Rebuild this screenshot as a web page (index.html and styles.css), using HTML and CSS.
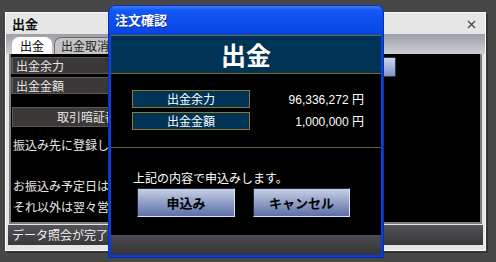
FILE: index.html
```html
<!DOCTYPE html>
<html lang="ja">
<head>
  <meta charset="UTF-8">
  <title>出金</title>
  <link rel="stylesheet" href="styles.css">
</head>
<body>
  <div class="desk">

    <!-- 背面：出金ウィンドウ -->
    <div class="win">
      <div class="win-title">
        <span>出金</span>
        <svg class="close" width="9" height="9" viewBox="0 0 9 9"><path d="M1 1L8 8M8 1L1 8" stroke="#4a4a4a" stroke-width="1.4"/></svg>
      </div>
      <div class="tabs">
        <div class="tab active">出金</div>
        <div class="tab">出金取消</div>
      </div>
      <div class="panel">
        <div class="row">
          <div class="cell">出金余力</div>
          <button class="mini"></button>
        </div>
        <div class="row">
          <div class="cell">出金金額</div>
        </div>
        <div class="pin">取引暗証番号</div>
        <div class="note">
          <p>振込み先に登録している口座へ出金します。</p>
          <p>&nbsp;</p>
          <p>お振込み予定日は、</p>
          <p>それ以外は翌々営業</p>
        </div>
      </div>
      <div class="status">データ照会が完了しました。</div>
    </div>

    <!-- 前面：注文確認ダイアログ -->
    <div class="dlg">
      <div class="dlg-title">注文確認</div>
      <div class="dlg-body">
        <div class="dlg-head">出金</div>
        <div class="summary">
          <div class="label">出金余力</div>
          <div class="value">96,336,272 <span>円</span></div>
          <div class="label">出金金額</div>
          <div class="value">1,000,000 <span>円</span></div>
        </div>
        <div class="msg">上記の内容で申込みします。</div>
        <div class="btns">
          <button class="btn ok">申込み</button>
          <button class="btn">キャンセル</button>
        </div>
        <div class="dlg-foot"></div>
      </div>
    </div>

  </div>
</body>
</html>
```

FILE: styles.css
```css
body {
  margin: 0;
  background: #474747;
  font-family: "Noto Sans CJK JP", "Liberation Sans", sans-serif;
  font-size: 12px;
}

.desk {
  position: relative;
  width: 496px;
  height: 262px;
  overflow: hidden;
  background: #474747;
}

/* 背面ウィンドウ */
.win {
  position: absolute;
  left: 5px;
  top: 12px;
  width: 481px;
  height: 239px;
  box-sizing: border-box;
  background: #e6e6e6;
  border: 1px solid #fbfbfb;
  box-shadow: 2px 2px 0 #333;
  padding: 0 3px 3px 3px;
  display: flex;
  flex-direction: column;
}

.win-title {
  height: 21px;
  display: flex;
  align-items: center;
  justify-content: space-between;
  padding: 0 6px 0 3px;
  font-weight: bold;
  font-size: 13px;
  color: #111;
}

.close {
  margin-top: 2px;
}

.tabs {
  height: 20px;
  margin: 0 -3px;
  padding-left: 6px;
  background: linear-gradient(#9ba0a6, #cdd0d3);
  display: flex;
  align-items: flex-end;
  gap: 2px;
}

.tab {
  height: 16px;
  line-height: 16px;
  padding: 0 6px;
  background: #c3c3c3;
  color: #222;
  border: 1px solid #6b6b6b;
  border-bottom: 0;
  border-radius: 7px 7px 0 0;
}

.tab.active {
  width: 26px;
  text-align: center;
  background: #fff;
  color: #000;
  border-color: #fff;
}

.panel {
  flex: 1;
  background: #000;
  border: 2px solid #7d7d7d;
  border-top: 0;
  padding: 3px 1px 0 1px;
  color: #e8e8e8;
  overflow: hidden;
}

.row {
  width: 384px;
  display: flex;
  align-items: flex-start;
}

.cell {
  width: 150px;
  height: 15px;
  line-height: 15px;
  padding-left: 3px;
  background: #3d3838;
  border: 1px solid #5e5959;
  box-shadow: -2px 0 0 #4a4646;
}

.mini {
  margin-left: auto;
  width: 80px;
  height: 20px;
  background: linear-gradient(#cdd6ea, #8392c2);
  border: 1px solid #2b3a5c;
  border-radius: 1px;
}

.pin {
  width: 200px;
  height: 18px;
  line-height: 18px;
  margin-top: 13px;
  padding-left: 44px;
  background: #3d3838;
  border: 1px solid #5e5959;
}

.note {
  padding: 8px 0 0 1px;
}

.note p {
  margin: 0;
  line-height: 20.7px;
}

.status {
  height: 20px;
  line-height: 20px;
  margin: 1px -1px 2px;
  padding-left: 4px;
  background: linear-gradient(#535358, #38383a);
  color: #f2f2f2;
}

/* ダイアログ */
.dlg {
  position: absolute;
  left: 108px;
  top: 5px;
  width: 276px;
  height: 253px;
  box-sizing: border-box;
  padding: 0 3px 3px 3px;
  border-radius: 7px 7px 0 0;
  background: linear-gradient(#4a88ff 0, #1458f6 5px, #0646e4 28px, #0a3cdc 100%);
  box-shadow: inset 0 0 0 1px #0a2ea8;
  display: flex;
  flex-direction: column;
}

.dlg-title {
  height: 30px;
  line-height: 30px;
  padding-left: 4px;
  color: #fff;
  font-weight: bold;
  font-size: 13px;
  text-shadow: 1px 1px 0 #0a2a90;
}

.dlg-body {
  flex: 1;
  background: #000;
  display: flex;
  flex-direction: column;
}

.dlg-head {
  height: 37px;
  line-height: 37px;
  text-align: center;
  background: #003456;
  border-top: 1px solid #7c6c1c;
  border-bottom: 1px solid #7c6c1c;
  color: #fff;
  font-size: 25px;
  font-weight: bold;
}

.summary {
  display: grid;
  grid-template-columns: 118px 1fr;
  row-gap: 3px;
  padding: 16px 17px 16px 21px;
  border-bottom: 1px solid #6e6418;
  color: #fff;
}

.label {
  height: 16px;
  line-height: 16px;
  text-align: center;
  background: #003456;
  border: 1px solid #8a7a2e;
}

.value {
  line-height: 18px;
  text-align: right;
  font-family: "Liberation Sans", "Noto Sans CJK JP", sans-serif;
}

.value span {
  font-family: "Noto Sans CJK JP", sans-serif;
}

.msg {
  margin-top: 22px;
  padding-left: 22px;
  line-height: 15px;
  color: #fff;
}

.btns {
  display: flex;
  gap: 18px;
  padding-left: 26px;
  margin-top: 3px;
}

.btn {
  width: 98px;
  height: 29px;
  background: linear-gradient(#c6d0e6, #5d6fa8);
  border: 1px solid #1c2640;
  border-bottom-color: #d8e4ff;
  border-right-color: #d8e4ff;
  border-radius: 1px;
  font-family: "Noto Sans CJK JP", sans-serif;
  font-size: 13px;
  font-weight: bold;
  color: #000;
  padding: 0;
}

.btn + .btn {
  width: 97px;
}

.dlg-foot {
  margin-top: auto;
  height: 20px;
  background: linear-gradient(#4a4a50, #35353a);
}
```
